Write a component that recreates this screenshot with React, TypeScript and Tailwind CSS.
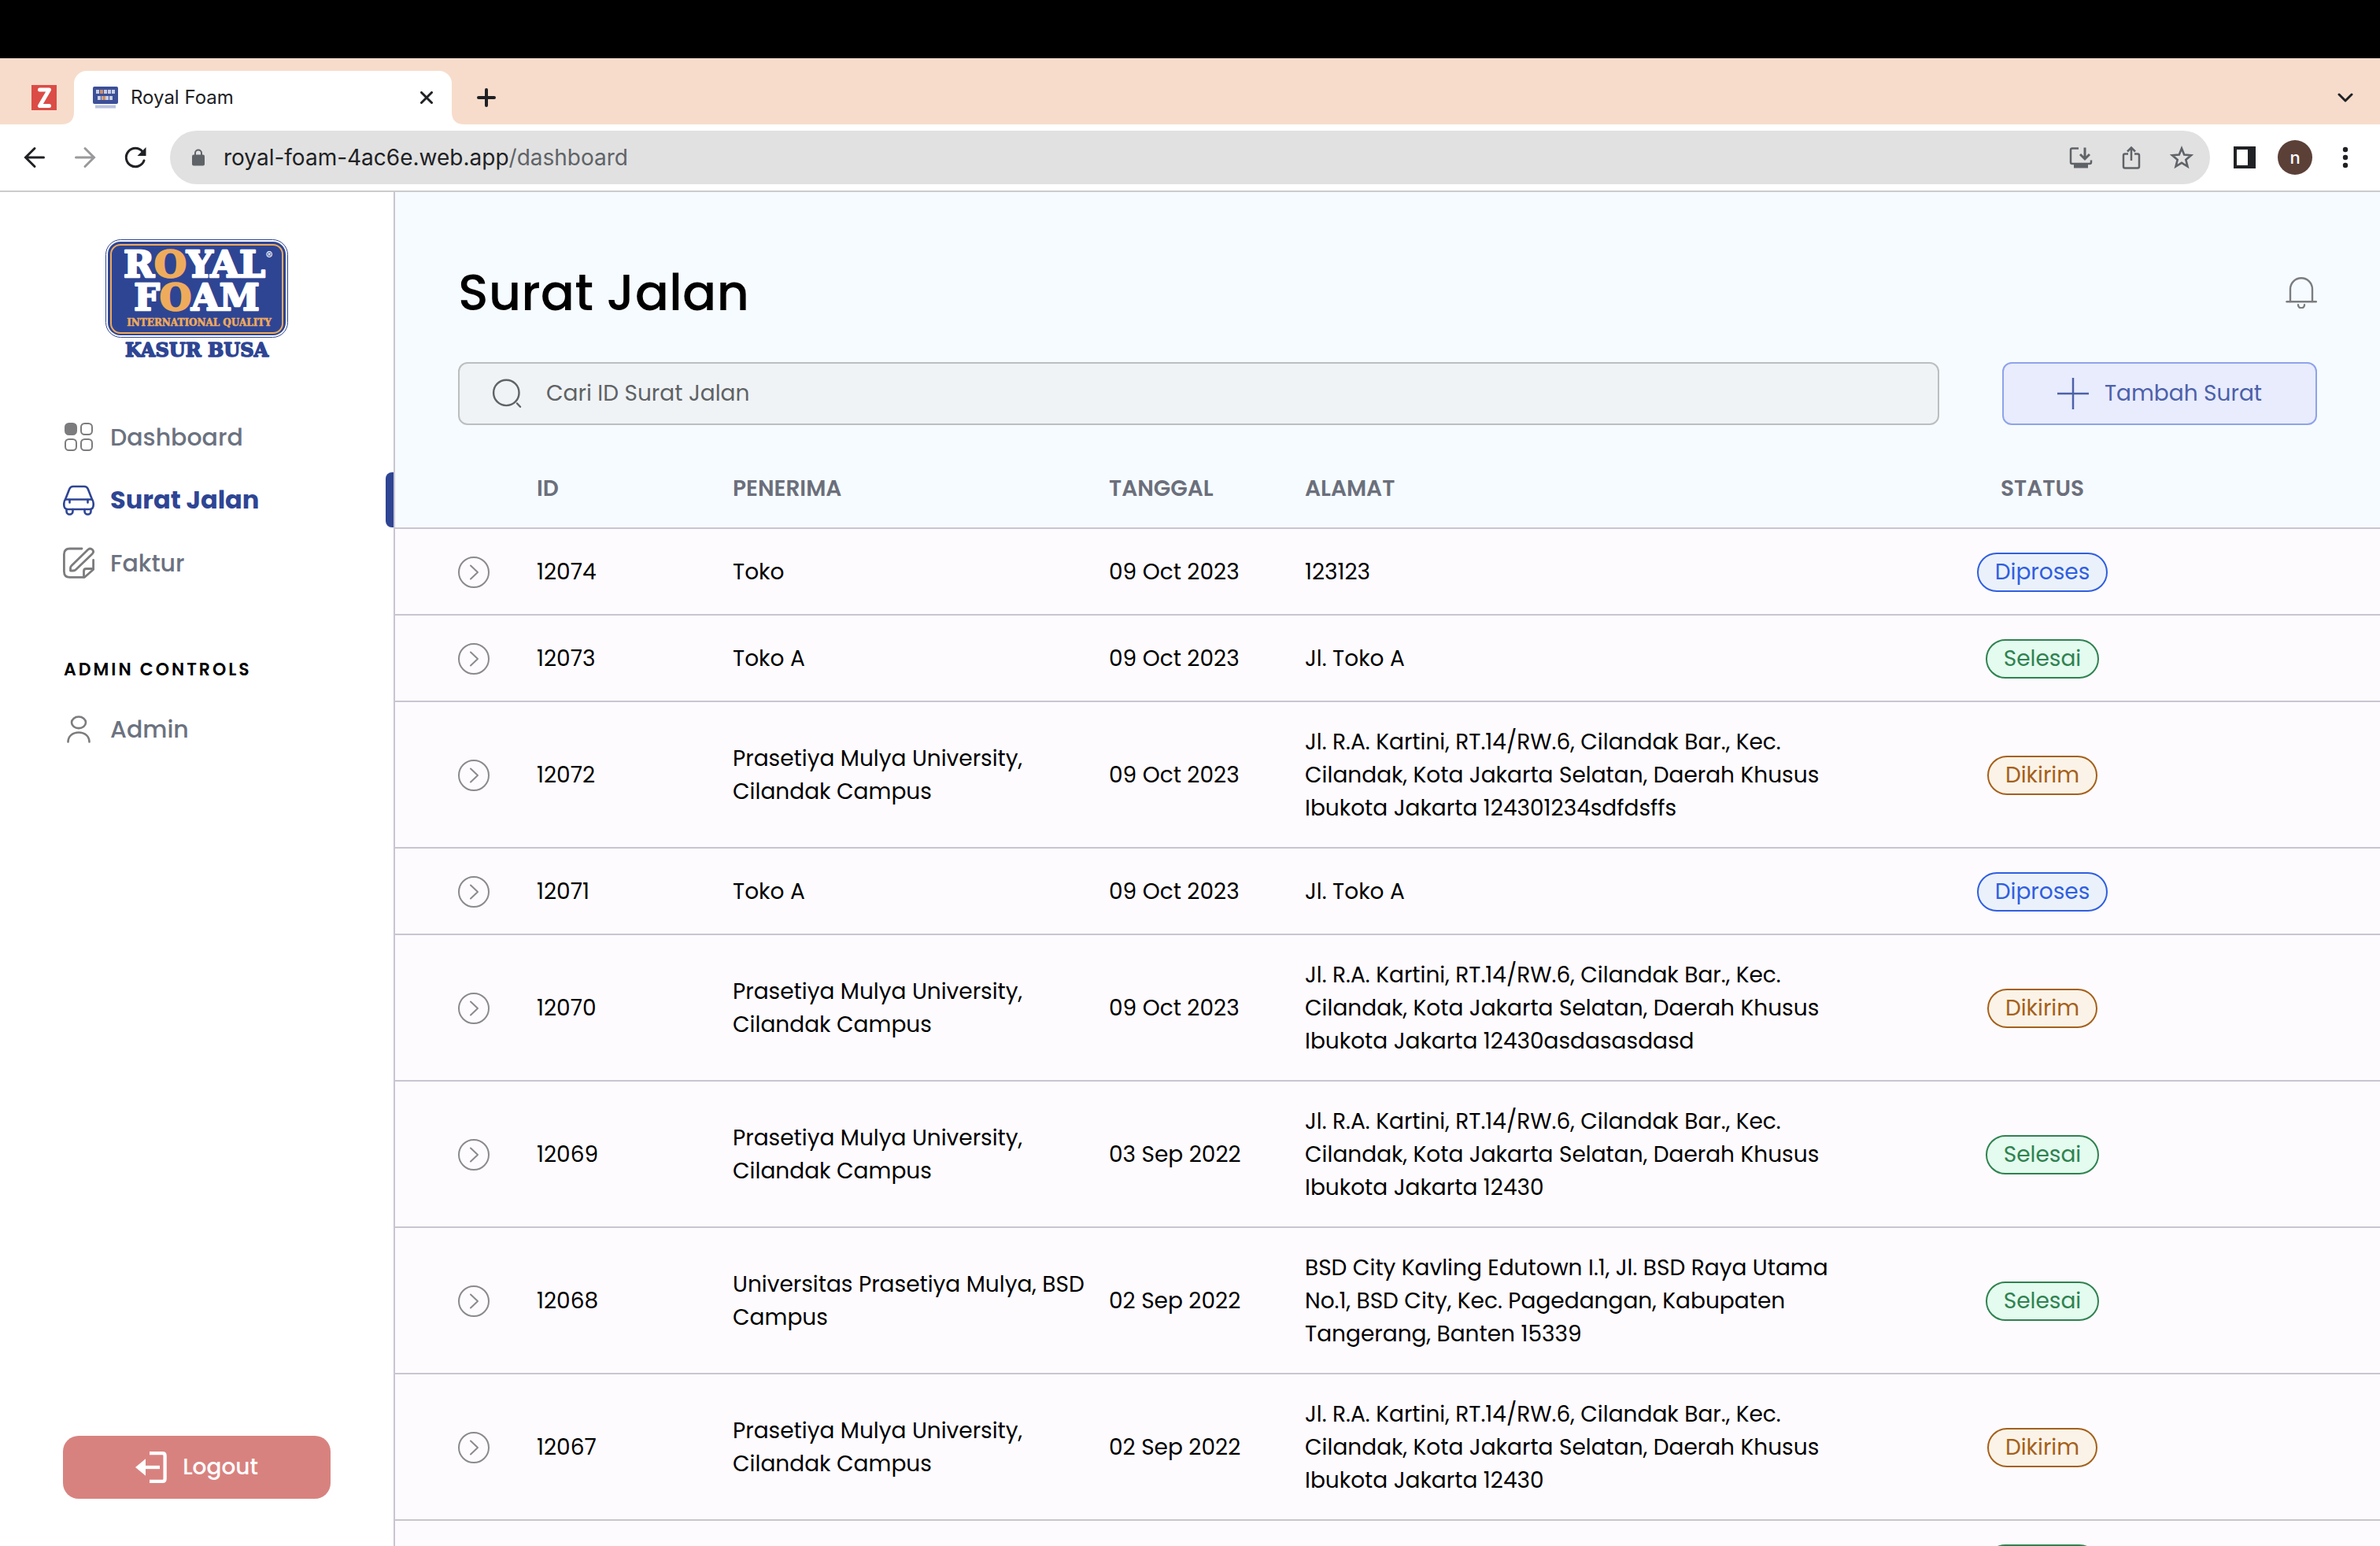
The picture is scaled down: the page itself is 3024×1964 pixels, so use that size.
import React from "react";

type Status = "Diproses" | "Selesai" | "Dikirim";

interface Surat {
  id: string;
  penerima: string;
  tanggal: string;
  alamat: string;
  status: Status;
}

const KARTINI =
  "Jl. R.A. Kartini, RT.14/RW.6, Cilandak Bar., Kec. Cilandak, Kota Jakarta Selatan, Daerah Khusus Ibukota Jakarta ";
const PRASMUL = "Prasetiya Mulya University, Cilandak Campus";

const rows: Surat[] = [
  { id: "12074", penerima: "Toko", tanggal: "09 Oct 2023", alamat: "123123", status: "Diproses" },
  { id: "12073", penerima: "Toko A", tanggal: "09 Oct 2023", alamat: "Jl. Toko A", status: "Selesai" },
  { id: "12072", penerima: PRASMUL, tanggal: "09 Oct 2023", alamat: KARTINI + "124301234sdfdsffs", status: "Dikirim" },
  { id: "12071", penerima: "Toko A", tanggal: "09 Oct 2023", alamat: "Jl. Toko A", status: "Diproses" },
  { id: "12070", penerima: PRASMUL, tanggal: "09 Oct 2023", alamat: KARTINI + "12430asdasasdasd", status: "Dikirim" },
  { id: "12069", penerima: PRASMUL, tanggal: "03 Sep 2022", alamat: KARTINI + "12430", status: "Selesai" },
  {
    id: "12068",
    penerima: "Universitas Prasetiya Mulya, BSD Campus",
    tanggal: "02 Sep 2022",
    alamat: "BSD City Kavling Edutown I.1, Jl. BSD Raya Utama No.1, BSD City, Kec. Pagedangan, Kabupaten Tangerang, Banten 15339",
    status: "Selesai",
  },
  { id: "12067", penerima: PRASMUL, tanggal: "02 Sep 2022", alamat: KARTINI + "12430", status: "Dikirim" },
  { id: "12066", penerima: "Toko A", tanggal: "02 Sep 2022", alamat: "Jl. Toko A", status: "Selesai" },
];

const badgeStyles: Record<Status, string> = {
  Diproses: "border-[#2f5fe0] bg-[#ebf1fb] text-[#2f5fe0]",
  Selesai: "border-[#2f8250] bg-[#e4fbef] text-[#2f8250]",
  Dikirim: "border-[#a5601a] bg-[#fbf3e7] text-[#a5601a]",
};

/* ---------- Icons ---------- */

function Icon({ children, width = 2 }: { children: React.ReactNode; width?: number }) {
  return (
    <svg
      viewBox="0 0 40 40"
      className="size-10 shrink-0"
      fill="none"
      stroke="currentColor"
      strokeWidth={width}
      strokeLinecap="round"
      strokeLinejoin="round"
      aria-hidden="true"
    >
      {children}
    </svg>
  );
}

const GridIcon = () => (
  <Icon>
    <rect x="3" y="3" width="14" height="14" rx="4.5" fill="currentColor" />
    <rect x="23" y="3" width="14" height="14" rx="4.5" />
    <rect x="3" y="23" width="14" height="14" rx="4.5" />
    <rect x="23" y="23" width="14" height="14" rx="4.5" />
  </Icon>
);

const CarIcon = () => (
  <Icon width={2.6}>
    <path d="M3 19.5 8.2 6.2Q9.6 3 13 3H27Q30.4 3 31.8 6.2L37 19.5" />
    <path d="M3 19.5H37Q38.700 21.5 38.700 24.5V26.5Q38.700 32 33.5 32H6.5Q1.300 32 1.300 26.5V24.5Q1.300 21.5 3 19.5Z" />
    <path d="M8.5 20V23.5M31.5 20V23.5" />
    <path d="M4.5 32V34.500A4 4 0 0 0 12.5 34.500V32M27.5 32V34.500A4 4 0 0 0 35.5 34.500V32" />
  </Icon>
);

const NoteIcon = () => (
  <Icon width={2.8}>
    <path d="M24 2H8.5Q1.4 2 1.4 9V31Q1.4 38.3 8.5 38.3H27.5L38.6 28.5V16.5" />
    <path d="M26.5 38V30.5Q26.5 27.5 29.5 27.5H38.3" />
    <path d="M9.5 30V26.5Q9.5 25 11 23.5L32 3Q34.8.8 37.4 3.2 39.8 5.7 37.4 8.4L16.5 28.5Q15 30 13 30Z" />
  </Icon>
);

const UserIcon = () => (
  <Icon width={2.6}>
    <ellipse cx="20" cy="11.8" rx="9" ry="7.300" />
    <path d="M6.500 36.500C6.500 29.500 12 24.500 20 24.500S33.500 29.500 33.500 36.500" />
  </Icon>
);

const LogoutIcon = () => (
  <svg viewBox="0 0 40 40" className="size-10 shrink-0" fill="none" stroke="currentColor" strokeWidth="4.3" aria-hidden="true">
    <path d="M0 20 13 9.3V30.7Z" fill="currentColor" stroke="none" />
    <path d="M12 20H31" />
    <path d="M18 2.2H34.5Q37.6 2.2 37.6 5.3V34.7Q37.6 37.8 34.5 37.8H18" />
  </svg>
);

const SearchIcon = () => (
  <Icon width={2.400}>
    <circle cx="19.3" cy="18.9" r="16.2" />
    <path d="M33 32.5 37 36.8" />
  </Icon>
);

const BellIcon = () => (
  <Icon width={2.400}>
    <path d="M6 31V15.200A14 14 0 0 1 34 15.200V31" />
    <path d="M1.5 31.2H38.800" />
    <path d="M16 35.2A4 4 0 0 0 24 35.2" />
  </Icon>
);

const ExpandIcon = () => (
  <Icon>
    <circle cx="20" cy="20" r="19" />
    <path d="M16 11.5 25 20 16 28.5" />
  </Icon>
);

function RoyalFoamLogo() {
  return (
    <svg viewBox="0 0 232 160" className="h-[160px] w-[232px]" role="img" aria-label="Royal Foam Kasur Busa">
      <rect x="0.5" y="0.5" width="231" height="124" rx="19" fill="#fff" stroke="#2e4594" />
      <rect x="3" y="3" width="226" height="119" rx="16" fill="#2e4594" />
      <rect x="7" y="7" width="218" height="112" rx="12" fill="none" stroke="#efab5c" strokeWidth="2" />
      <g fontFamily="'Cooper Black', 'DejaVu Serif', serif" fontWeight="900" textAnchor="middle" strokeLinejoin="round">
        <g fill="#fff" stroke="#fff" strokeWidth="2.5">
          <text x="113" y="48" fontSize="47">
            R<tspan fill="#efab5c" stroke="#efab5c">O</tspan>YAL
          </text>
          <text x="116" y="90" fontSize="46">
            F<tspan fill="#efab5c" stroke="#efab5c">O</tspan>AM
          </text>
        </g>
        <text x="119" y="110" fontSize="12" fill="#efab5c" stroke="#efab5c" strokeWidth="0.5">
          INTERNATIONAL QUALITY
        </text>
        <text x="116" y="149" fontSize="24" fill="#2e4594" stroke="#2e4594" strokeWidth="1.5">
          KASUR BUSA
        </text>
      </g>
      <text x="208" y="25" fontSize="13" fontWeight="600" fontFamily="Inter, sans-serif" fill="#fff" textAnchor="middle">
        ®
      </text>
    </svg>
  );
}

/* ---------- Browser chrome ---------- */

function TabStrip() {
  return (
    <div className="flex h-[84px] items-end bg-[#f7dccb] text-[#202124]">
      <button aria-label="Pinned tab" className="ml-10 flex h-[68px] items-center">
        <svg viewBox="0 0 32 32" className="size-8" aria-hidden="true">
          <rect width="32" height="32" fill="#db4c46" />
          <path d="M10.5 6H22.5L10.5 26.5H22.5" fill="none" stroke="#fff" strokeWidth="5" strokeLinejoin="round" strokeLinecap="round" />
        </svg>
      </button>
      <svg viewBox="0 0 16 16" className="ml-1.5 size-4" fill="#fff" aria-hidden="true">
        <path d="M16 0V16H0Q16 16 16 0Z" />
      </svg>
      <div className="flex h-[68px] w-[480px] items-center rounded-t-2xl bg-white px-6">
        <svg viewBox="0 0 32 28" className="h-7 w-8 shrink-0" aria-hidden="true">
          <rect width="32" height="22" rx="2" fill="#3c4f98" />
          <path d="M4 6.5H28M6 14.5H26" stroke="#c9cde0" strokeWidth="5" strokeDasharray="4 1" />
          <path d="M9 6.5H13M12 14.5H16" stroke="#c98d6a" strokeWidth="5" />
          <path d="M3 25.5H29" stroke="#b9c1df" strokeWidth="4" />
        </svg>
        <span className="ml-4 grow text-2xl">Royal Foam</span>
        <button aria-label="Close tab">
          <svg viewBox="0 0 16 16" className="size-4" stroke="currentColor" strokeWidth="3" strokeLinecap="round" aria-hidden="true">
            <path d="M1.5 1.5 14.5 14.5M14.5 1.5 1.5 14.5" />
          </svg>
        </button>
      </div>
      <svg viewBox="0 0 16 16" className="size-4" fill="#fff" aria-hidden="true">
        <path d="M0 0V16H16Q0 16 0 0Z" />
      </svg>
      <button aria-label="New tab" className="ml-4 flex h-[68px] items-center">
        <svg viewBox="0 0 24 24" className="size-6" stroke="currentColor" strokeWidth="4" strokeLinecap="round" aria-hidden="true">
          <path d="M12 2V22M2 12H22" />
        </svg>
      </button>
      <button aria-label="Search tabs" className="mr-[34px] ml-auto flex h-[68px] items-center">
        <svg viewBox="0 0 20 12" className="h-3 w-5" fill="none" stroke="currentColor" strokeWidth="3" strokeLinecap="round" strokeLinejoin="round" aria-hidden="true">
          <path d="M2 2 10 10 18 2" />
        </svg>
      </button>
    </div>
  );
}

function Toolbar() {
  return (
    <div className="flex h-[86px] items-center border-b-2 border-[#cbcbcb] bg-white text-[#202124]">
      <div className="flex gap-8 px-7">
        <button aria-label="Back">
          <svg viewBox="0 0 32 32" className="size-8" fill="none" stroke="currentColor" strokeWidth="3" strokeLinecap="round" aria-hidden="true">
            <path d="M27.5 16H5M16 4.5 4.5 16 16 27.5" />
          </svg>
        </button>
        <button aria-label="Forward" className="text-[#9a9a9c]">
          <svg viewBox="0 0 32 32" className="size-8" fill="none" stroke="currentColor" strokeWidth="3" strokeLinecap="round" aria-hidden="true">
            <path d="M4.5 16H27M16 4.5 27.5 16 16 27.5" />
          </svg>
        </button>
        <button aria-label="Reload">
          <svg viewBox="0 0 32 32" className="size-8" fill="none" stroke="currentColor" strokeWidth="3" strokeLinecap="round" aria-hidden="true">
            <path d="M27 20A11.700 11.700 0 1 1 25 8.5" />
            <path d="M29.5 3V14H18.5Z" fill="currentColor" stroke="none" />
          </svg>
        </button>
      </div>
      <div className="flex h-[68px] grow items-center rounded-full bg-[#e1e1e1] pr-5 pl-7 text-[#5f6368]">
        <svg viewBox="0 0 16 22" className="h-[22px] w-4" aria-hidden="true">
          <rect y="7.5" width="16" height="14" rx="2" fill="currentColor" />
          <path d="M4 8V5.5A4 4 0 0 1 12 5.5V8" fill="none" stroke="currentColor" strokeWidth="2" />
        </svg>
        <button aria-label="Address" className="ml-6 grow text-left text-[28px]">
          <span className="text-[#202124]">royal-foam-4ac6e.web.app</span>/dashboard
        </button>
        <div className="flex gap-8">
          <button aria-label="Install app">
            <svg viewBox="0 0 32 32" className="size-8" fill="none" stroke="currentColor" strokeWidth="2.5" aria-hidden="true">
              <path d="M13 4.5H5Q3 4.5 3 6.5V22Q3 24 5 24H27Q29 24 29 22V19.5" />
              <path d="M21 3.5V18M15 12 21 18 27 12" strokeWidth="3" />
              <path d="M7 27H25" strokeWidth="5" />
            </svg>
          </button>
          <button aria-label="Share">
            <svg viewBox="0 0 32 32" className="size-8" fill="none" stroke="currentColor" strokeWidth="2.5" aria-hidden="true">
              <path d="M12 11.5H8Q6 11.5 6 13.5V27.5Q6 29.5 8 29.5H24Q26 29.5 26 27.5V13.5Q26 11.5 24 11.5H20" />
              <path d="M16 20V4M11 8.5 16 3.5 21 8.5" />
            </svg>
          </button>
          <button aria-label="Bookmark">
            <svg viewBox="0 0 32 32" className="size-8" fill="none" stroke="currentColor" strokeWidth="2.6" aria-hidden="true">
              <path d="M16 4.500 19.2 12.5 28 13.200 21.300 18.900 23.500 27.500 16 22.900 8.500 27.500 10.700 18.900 4 13.200 12.800 12.500Z" />
            </svg>
          </button>
        </div>
      </div>
      <div className="flex items-center gap-7 px-[30px]">
        <button aria-label="Side panel">
          <svg viewBox="0 0 28 28" className="size-7" aria-hidden="true">
            <path d="M0 0H28V28H0ZM4 4V24H18V4Z" fill="currentColor" fillRule="evenodd" />
          </svg>
        </button>
        <button aria-label="Profile" className="flex size-11 items-center justify-center rounded-full bg-[#5b4037] text-[22px] font-medium text-white">
          n
        </button>
        <button aria-label="Menu">
          <svg viewBox="0 0 28 32" className="h-8 w-7" fill="currentColor" aria-hidden="true">
            <circle cx="14" cy="6" r="3.2" />
            <circle cx="14" cy="16" r="3.2" />
            <circle cx="14" cy="26" r="3.2" />
          </svg>
        </button>
      </div>
    </div>
  );
}

/* ---------- Sidebar ---------- */

function NavItem({ icon, label, active = false }: { icon: React.ReactNode; label: string; active?: boolean }) {
  return (
    <a
      href="#"
      aria-current={active ? "page" : undefined}
      className={
        active
          ? "flex h-20 items-center gap-5 pl-20 text-[32px] font-bold text-[#2e4594]"
          : "flex h-20 items-center gap-5 pl-20 text-[30px] font-medium text-[#6b7280]"
      }
    >
      <span className={active ? "text-[#2e4594]" : "text-[#7c7c7f]"}>{icon}</span>
      {label}
      {active && <span className="ml-auto h-[70px] w-[10px] rounded-l-lg bg-[#2e4594]" />}
    </a>
  );
}

function Sidebar() {
  return (
    <aside className="flex w-[502px] shrink-0 flex-col border-r-2 border-[#c9c5d0] bg-white py-[60px]">
      <div className="mb-[51px] flex justify-center">
        <RoyalFoamLogo />
      </div>
      <nav>
        <NavItem icon={<GridIcon />} label="Dashboard" />
        <NavItem icon={<CarIcon />} label="Surat Jalan" active />
        <NavItem icon={<NoteIcon />} label="Faktur" />
        <h2 className="mt-[78px] mb-[17px] pl-[81px] text-[22px] leading-9 font-semibold tracking-[3px] text-black">ADMIN CONTROLS</h2>
        <NavItem icon={<UserIcon />} label="Admin" />
      </nav>
      <button className="mx-20 mt-auto flex h-20 items-center justify-center gap-5 rounded-[20px] bg-[#d8827f] text-[28px] font-medium text-white">
        <LogoutIcon />
        Logout
      </button>
    </aside>
  );
}

/* ---------- Main ---------- */

export default function App() {
  return (
    <div className="flex h-screen flex-col overflow-hidden bg-white font-['Poppins','Inter',sans-serif]">
      <div className="h-[74px] shrink-0 bg-black" />
      <header className="shrink-0 font-['Inter',sans-serif]">
        <TabStrip />
        <Toolbar />
      </header>
      <div className="flex min-h-0 grow">
        <Sidebar />
        <main className="min-w-0 grow bg-[#fefbff]">
          <div className="bg-[#f6fbff] px-20 pt-20 pb-[30px]">
            <div className="mb-10 flex items-center justify-between">
              <h1 className="text-[64px] leading-[96px] font-medium text-black">Surat Jalan</h1>
              <button aria-label="Notifications" className="text-[#7c7c7f]">
                <BellIcon />
              </button>
            </div>
            <div className="flex gap-20">
              <label className="flex h-20 grow items-center gap-[30px] rounded-xl border-2 border-[#bcbebf] bg-[#eff3f6] px-10 text-[#606264]">
                <SearchIcon />
                <input
                  type="text"
                  aria-label="Cari ID Surat Jalan"
                  placeholder="Cari ID Surat Jalan"
                  className="grow bg-transparent text-[28px] outline-none placeholder:text-[#606264]"
                />
              </label>
              <button className="flex h-20 w-[400px] items-center justify-center gap-5 rounded-xl border-2 border-[#8fa3ea] bg-[#e8ecfd] text-[28px] text-[#4c61a9]">
                <Icon width={2.500}>
                  <path d="M20 0V40M0 20H40" />
                </Icon>
                Tambah Surat
              </button>
            </div>
          </div>
          <table className="w-full table-fixed border-collapse text-left text-[28px] leading-[42px] text-black">
            <colgroup>
              <col className="w-[180px]" />
              <col className="w-[249px]" />
              <col className="w-[478px]" />
              <col className="w-[249px]" />
              <col />
              <col className="w-[498px]" />
              <col className="w-[180px]" />
            </colgroup>
            <thead>
              <tr className="h-[101px] border-b-2 border-[#c9c5d0] bg-[#f6fbff] text-[#6b6f7b]">
                <th aria-label="Detail" />
                <th className="pt-0.5 font-semibold">ID</th>
                <th className="pt-0.5 font-semibold">PENERIMA</th>
                <th className="pt-0.5 font-semibold">TANGGAL</th>
                <th className="pt-0.5 font-semibold">ALAMAT</th>
                <th className="pt-0.5 text-center font-semibold">STATUS</th>
                <th aria-label="Aksi" />
              </tr>
            </thead>
            <tbody>
              {rows.map((r) => (
                <tr key={r.id} className="border-b-2 border-[#c9c5d0]">
                  <td className="pt-[30px] pb-7 pl-20">
                    <button aria-label={"Detail " + r.id} className="block text-[#8a8a8d]">
                      <ExpandIcon />
                    </button>
                  </td>
                  <td className="pt-[30px] pb-7">{r.id}</td>
                  <td className="pt-[30px] pr-4 pb-7">{r.penerima}</td>
                  <td className="pt-[30px] pb-7">{r.tanggal}</td>
                  <td className="pt-[30px] pb-7">{r.alamat}</td>
                  <td className="pt-[30px] pb-7">
                    <span className={"mx-auto flex h-[50px] w-fit items-center rounded-full border-2 px-[21px] " + badgeStyles[r.status]}>
                      {r.status}
                    </span>
                  </td>
                  <td />
                </tr>
              ))}
            </tbody>
          </table>
        </main>
      </div>
    </div>
  );
}
